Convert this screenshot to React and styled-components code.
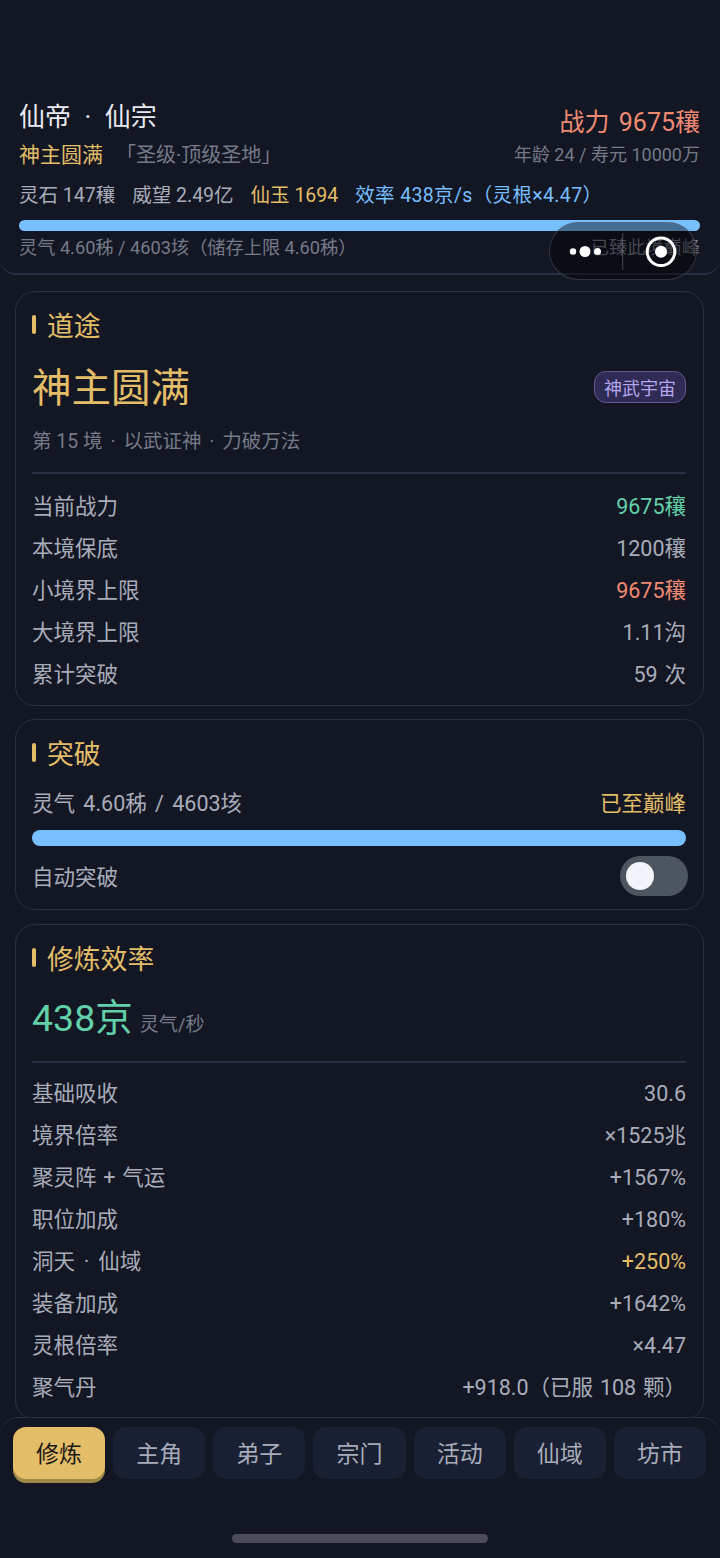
import React from 'react';
import styled, { createGlobalStyle } from 'styled-components';

const Global = createGlobalStyle`
  html, body { margin: 0; padding: 0; background: #131724; }
  * { box-sizing: border-box; }
`;

const C = {
  gold: '#e3bd68', red: '#ef8a72', green: '#62d0a8', blue: '#78bfff',
  text: '#a8acb9', dim: '#757a89', line: '#2a2f45', bg: '#131724',
};

const Page = styled.div`
  position: relative;
  width: 720px;
  height: 1558px;
  display: flex;
  flex-direction: column;
  overflow: hidden;
  background: ${C.bg};
  font-family: Roboto, "Noto Sans CJK SC", sans-serif;
  color: ${C.text};
`;
const Header = styled.header`
  flex: none;
  height: 275px;
  padding: 101px 20px 0 19px;
  border-bottom: 2px solid ${C.line};
  border-radius: 0 0 16px 16px;
`;
const Line = styled.div`
  display: flex;
  justify-content: space-between;
  align-items: ${p => p.$align || 'center'};
  height: ${p => p.$h}px;
  margin-top: ${p => p.$mt || 0}px;
`;
const Name = styled.div`
  font-size: 26px;
  line-height: 32px;
  color: #e8eaf0;
`;
const Dot = styled.span`
  margin: 0 ${p => p.$m}px;
`;
const Power = styled.div`
  font-size: 25px;
  line-height: 32px;
  margin-top: 6px;
  word-spacing: 3px;
  color: ${C.red};
`;
const Inline = styled.div`
  display: flex;
  align-items: center;
  gap: ${p => p.$gap || 0}px;
  font-size: ${p => p.$size || 19}px;
  white-space: nowrap;
`;
const Span = styled.span`
  color: ${p => p.$c || 'inherit'};
  font-size: ${p => (p.$size ? `${p.$size}px` : 'inherit')};
  margin-left: ${p => p.$ml || 0}px;
  letter-spacing: ${p => p.$ls || 0}px;
`;
const Bar = styled.div`
  height: ${p => p.$h}px;
  margin-top: ${p => p.$mt || 0}px;
  border-radius: ${p => p.$h / 2}px;
  background: ${C.blue};
`;
const Note = styled.div`
  display: flex;
  justify-content: space-between;
  font-size: 18.2px;
  line-height: 26px;
  margin-top: 4px;
  color: ${C.dim};
  white-space: nowrap;
`;
const Main = styled.main`
  flex: 1;
  min-height: 0;
  overflow: hidden;
  padding: 16px 16px 0 15px;
  display: flex;
  flex-direction: column;
  gap: 13.5px;
`;
const Card = styled.section`
  flex: none;
  padding: ${p => p.$pt ?? 13}px 17px ${p => p.$pb ?? 12}px 16px;
  border: 1.5px solid ${C.line};
  border-radius: 20px;
`;
const CardTitle = styled.h2`
  margin: 0;
  display: flex;
  align-items: center;
  gap: 11px;
  height: 38px;
  font-size: 26.8px;
  font-weight: 400;
  color: ${C.gold};
  &::before {
    content: '';
    width: 4px;
    height: 19px;
    border-radius: 2px;
    background: ${C.gold};
  }
`;
const Realm = styled.div`
  font-size: 39.5px;
  line-height: 50px;
  margin-top: 3px;
  color: ${C.gold};
`;
const Badge = styled.div`
  height: 32px;
  padding: 0 9px;
  display: flex;
  align-items: center;
  border: 1.5px solid #5d5a9a;
  border-radius: 12px;
  background: #2f2b55;
  color: #b5a6ee;
  font-size: 18px;
`;
const Sub = styled.div`
  font-size: 19.5px;
  line-height: 28px;
  margin-top: 9px;
  color: ${C.dim};
`;
const Divider = styled.hr`
  margin: ${p => p.$m};
  border: 0;
  height: 2px;
  background: ${C.line};
`;
const Row = styled.div`
  display: flex;
  justify-content: space-between;
  align-items: center;
  height: 42px;
  padding-top: 4px;
  margin-top: ${p => p.$mt || 0}px;
  font-size: 21.5px;
  line-height: 30px;
  word-spacing: ${p => p.$ws ?? 1.5}px;
  white-space: nowrap;
  color: ${C.text};
`;
const Val = styled.span`
  color: ${p => p.$c || C.text};
`;
const Toggle = styled.div`
  width: 68px;
  height: 40px;
  margin: -4px -1.5px 0 0;
  padding: 6px;
  border-radius: 20px;
  background: #4d5560;
  &::after {
    content: '';
    display: block;
    width: 28px;
    height: 28px;
    border-radius: 50%;
    background: #f3f4fa;
  }
`;
const Rate = styled.div`
  display: flex;
  align-items: baseline;
  gap: 7px;
  height: 56px;
  margin-top: 13.5px;
  font-size: 37.5px;
  line-height: 56px;
  color: ${C.green};
`;
const RateUnit = styled.span`
  font-size: 19px;
  color: ${C.dim};
`;
const Nav = styled.nav`
  flex: none;
  height: 141px;
  margin-top: -1px;
  padding: 9px 14px 0 13px;
  position: relative;
  background: ${C.bg};
  border-top: 1.5px solid ${C.line};
  border-radius: 18px 18px 0 0;
`;
const Tabs = styled.div`
  display: flex;
  gap: 8px;
`;
const Tab = styled.div`
  flex: 1;
  height: 52px;
  padding-bottom: 3px;
  display: flex;
  align-items: center;
  justify-content: center;
  border-radius: 13px;
  font-size: 23px;
  background: ${p => (p.$active ? C.gold : '#1a2033')};
  color: ${p => (p.$active ? '#1b1a16' : '#a8acb9')};
  box-shadow: ${p => (p.$active ? '0 4px 0 #a18748' : 'none')};
`;
const HomeBar = styled.div`
  position: absolute;
  left: 232px;
  top: 116px;
  width: 256px;
  height: 9px;
  border-radius: 5px;
  background: #4b4e5a;
`;
const Capsule = styled.div`
  position: absolute;
  left: 549px;
  top: 222px;
  width: 148px;
  height: 58px;
  border-radius: 29px;
  background: rgba(0, 0, 0, 0.42);
  border: 1.5px solid rgba(90, 95, 110, 0.5);
`;
const MiniIcon = styled.svg`
  display: block;
  width: 148px;
  height: 58px;
  margin: -1.5px;
`;

const stats1 = [
  ['当前战力', '9675穰', C.green],
  ['本境保底', '1200穰'],
  ['小境界上限', '9675穰', C.red],
  ['大境界上限', '1.11沟'],
  ['累计突破', '59 次'],
];
const stats2 = [
  ['基础吸收', '30.6'],
  ['境界倍率', '×1525兆'],
  ['聚灵阵 + 气运', '+1567%'],
  ['职位加成', '+180%'],
  [<>洞天<Dot $m={2}> · </Dot>仙域</>, '+250%', C.gold],
  ['装备加成', '+1642%'],
  ['灵根倍率', '×4.47'],
  ['聚气丹', '+918.0（已服 108 颗）'],
];
const tabs = ['修炼', '主角', '弟子', '宗门', '活动', '仙域', '坊市'];

export default function App() {
  return (
    <Page>
      <Global />
      <Header>
        <Line $h={32} $align="flex-start">
          <Name>仙帝<Dot $m={7}> · </Dot>仙宗</Name>
          <Power>战力 9675穰</Power>
        </Line>
        <Line $h={40}>
          <Inline $size={20}>
            <Span $c={C.gold} $size={21}>神主圆满</Span>
            <Span $c={C.dim} $ml={13}>「圣级·顶级圣地」</Span>
          </Inline>
          <Inline $size={18}><Span $c={C.dim}>年龄 24 / 寿元 10000万</Span></Inline>
        </Line>
        <Line $h={40}>
          <Inline $gap={17} $size={19.5}>
            <Span>灵石 147穰</Span>
            <Span>威望 2.49亿</Span>
            <Span $c={C.gold}>仙玉 1694</Span>
            <Span $c={C.blue} $ls={0.35}>效率 438京/s（灵根×4.47）</Span>
          </Inline>
        </Line>
        <Bar $h={11} $mt={7} />
        <Note>
          <span>灵气 4.60秭 / 4603垓（储存上限 4.60秭）</span>
          <span>已臻此境巅峰</span>
        </Note>
      </Header>
      <Main>
        <Card $pb={11}>
          <CardTitle>道途</CardTitle>
          <Line $h={64} $mt={12}>
            <Realm>神主圆满</Realm>
            <Badge>神武宇宙</Badge>
          </Line>
          <Sub>第 15 境<Dot $m={3}> · </Dot>以武证神<Dot $m={3}> · </Dot>力破万法</Sub>
          <Divider $m="16px 0 9.5px" />
          {stats1.map(([k, v, c], i) => (
            <Row key={i}><span>{k}</span><Val $c={c}>{v}</Val></Row>
          ))}
        </Card>
        <Card $pb={12}>
          <CardTitle>突破</CardTitle>
          <Row $mt={10} $ws={3}>
            <span>灵气 4.60秭 / 4603垓</span>
            <Val $c={C.gold}>已至巅峰</Val>
          </Row>
          <Bar $h={16} $mt={7} />
          <Row $mt={9}>
            <span>自动突破</span>
            <Toggle />
          </Row>
        </Card>
        <Card $pt={14}>
          <CardTitle>修炼效率</CardTitle>
          <Rate>438京<RateUnit>灵气/秒</RateUnit></Rate>
          <Divider $m="15px 0 8px" />
          {stats2.map(([k, v, c], i) => (
            <Row key={i}><span>{k}</span><Val $c={c}>{v}</Val></Row>
          ))}
        </Card>
      </Main>
      <Nav>
        <Tabs>
          {tabs.map((t, i) => <Tab key={t} $active={i === 0}>{t}</Tab>)}
        </Tabs>
        <HomeBar />
      </Nav>
      <Capsule>
        <MiniIcon viewBox="0 0 148 58">
          <circle cx="24" cy="29.5" r="3.2" fill="#fff" />
          <circle cx="36" cy="29.5" r="5.5" fill="#fff" />
          <circle cx="48.5" cy="29.5" r="3.5" fill="#fff" />
          <rect x="73.2" y="11" width="1" height="37" fill="rgba(255,255,255,.25)" />
          <circle cx="112" cy="29.7" r="13.8" fill="none" stroke="#fff" strokeWidth="3" />
          <circle cx="112" cy="29.7" r="6" fill="#fff" />
        </MiniIcon>
      </Capsule>
    </Page>
  );
}
